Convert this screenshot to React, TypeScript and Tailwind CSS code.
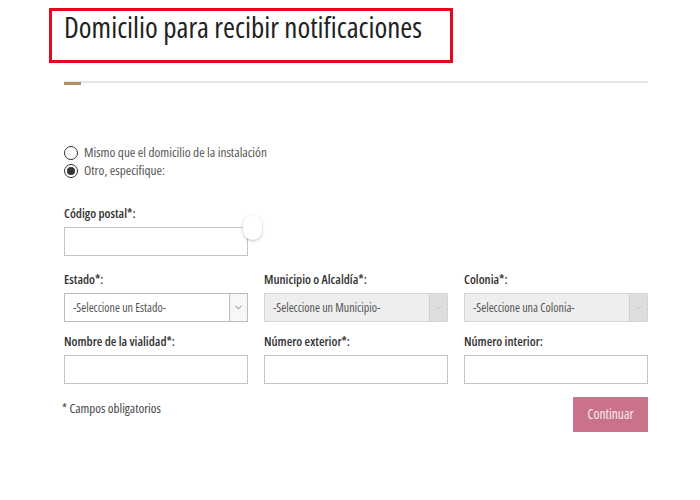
import { ChevronDown } from "lucide-react";

function Select({ text, disabled }: { text: string; disabled?: boolean }) {
  return (
    <div
      className={
        "flex h-[29px] border " +
        (disabled ? "border-[#d4d4d4] bg-[#eeeeee]" : "border-[#bdbdbd] bg-white")
      }
    >
      <div className="flex flex-1 items-center pl-[8px] text-[12px] text-[#555]">{text}</div>
      <div
        className={
          "flex w-[18px] items-center justify-center border-l " +
          (disabled ? "border-[#cfcfcf] bg-[#dedede] text-[#b5b5b5]" : "border-[#bdbdbd] bg-[#f7f7f7] text-[#555]")
        }
      >
        <ChevronDown className="h-[11px] w-[11px]" strokeWidth={1.6} />
      </div>
    </div>
  );
}

function Field({ label, children }: { label: string; children: React.ReactNode }) {
  return (
    <div className="flex flex-col gap-[6px]">
      <span className="text-[12.75px] font-semibold leading-[16px] text-[#333]">{label}</span>
      {children}
    </div>
  );
}

function Input() {
  return <div className="h-[29px] border border-[#c4c4c4] bg-white" />;
}

export default function App() {
  return (
    <div className="relative h-[500px] w-[700px] bg-white font-['Open_Sans',sans-serif] font-stretch-condensed text-[#333]">
      <div className="pt-[8px]">
        <div className="ml-[49px] flex h-[55px] w-[404px] items-start border-[3px] border-[#e30a1c] pl-[12px] pt-[1px]">
          <h1 className="text-[29px] font-medium leading-none text-[#222]">
            Domicilio para recibir notificaciones
          </h1>
        </div>
      </div>

      <div className="relative ml-[64px] mt-[18px] h-[2px] w-[584px] bg-[#e4e4e4]">
        <div className="absolute left-0 top-[1px] h-[3px] w-[17px] bg-[#b58b5f]" />
      </div>

      <div className="ml-[64px] mt-[61px] flex w-[584px] flex-col">
        <label className="flex h-[18px] items-center gap-[6px] text-[13.25px] text-[#555]">
          <span className="h-[14px] w-[14px] rounded-full border border-[#333] bg-white" />
          Mismo que el domicilio de la instalación
        </label>
        <label className="flex h-[18px] items-center gap-[6px] text-[13.25px] text-[#555]">
          <span className="flex h-[14px] w-[14px] items-center justify-center rounded-full border border-[#333] bg-white">
            <span className="h-[8px] w-[8px] rounded-full bg-[#333]" />
          </span>
          Otro, especifique:
        </label>

        <div className="mt-[25px] w-[184px]">
          <Field label="Código postal*:">
            <div className="relative">
              <Input />
              <div className="absolute -right-[14px] -top-[12px] h-[25px] w-[19px] rounded-full bg-white shadow-[0_1px_3px_rgba(0,0,0,0.25)]" />
            </div>
          </Field>
        </div>

        <div className="mt-[15px] grid grid-cols-3 gap-x-[16px] gap-y-[11px]">
          <Field label="Estado*:">
            <Select text="-Seleccione un Estado-" />
          </Field>
          <Field label="Municipio o Alcaldía*:">
            <Select text="-Seleccione un Municipio-" disabled />
          </Field>
          <Field label="Colonia*:">
            <Select text="-Seleccione una Colonia-" disabled />
          </Field>
          <Field label="Nombre de la vialidad*:">
            <Input />
          </Field>
          <Field label="Número exterior*:">
            <Input />
          </Field>
          <Field label="Número interior:">
            <Input />
          </Field>
        </div>

        <div className="mt-[13px] flex items-start justify-between">
          <span className="-ml-[2px] mt-[2px] text-[13px] text-[#444]">* Campos obligatorios</span>
          <button className="h-[35px] w-[75px] bg-[#c9728a] text-[13.5px] text-[#fbe9ee]">Continuar</button>
        </div>
      </div>
    </div>
  );
}
